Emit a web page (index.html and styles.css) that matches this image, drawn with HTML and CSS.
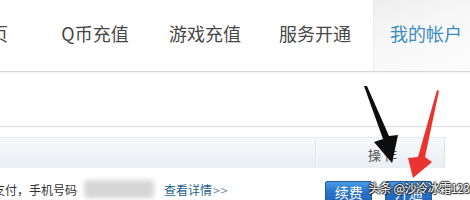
FILE: index.html
```html
<!DOCTYPE html>
<html lang="zh">
<head>
<meta charset="utf-8">
<link rel="stylesheet" href="styles.css">
</head>
<body>
<div class="page">
  <nav class="nav">
    <a class="nav-item first">首页</a>
    <a class="nav-item">Q币充值</a>
    <a class="nav-item">游戏充值</a>
    <a class="nav-item">服务开通</a>
    <a class="nav-item active">我的帐户</a>
  </nav>
  <div class="content">
    <div class="rule"></div>
    <div class="thead">
      <div class="th th-main"></div>
      <div class="th th-op">操 作</div>
    </div>
    <div class="row">
      <span class="desc">支付，手机号码</span>
      <span class="blur"></span>
      <a class="detail">查看详情<span class="gt">&gt;&gt;</span></a>
      <span class="btns">
        <button class="btn">续费</button>
        <button class="btn">开通</button>
      </span>
    </div>
  </div>
  <svg class="arrows" width="470" height="200" viewBox="0 0 470 200">
    <polygon fill="#0d0d0d" points="364,86 367,86 389,136 398,135 392,163 374,142 383,139"/>
    <polygon fill="#e9342f" points="437,90 439,91 425,157 432,162 413,178 408,158 418,157"/>
  </svg>
  <div class="watermark">头条 @沙冷冰霜123</div>
</div>
</body>
</html>
```
FILE: styles.css
```css
* { box-sizing: border-box; }
html, body { margin: 0; padding: 0; background: #fff; }
body {
  width: 470px;
  height: 200px;
  overflow: hidden;
  font-family: "Noto Sans CJK SC", "Noto Sans", sans-serif;
}
.page { position: relative; width: 470px; height: 200px; overflow: hidden; }

.nav {
  display: flex;
  height: 72px;
  margin-left: -70px;
  border-bottom: 1px solid #d6d6d6;
  box-shadow: 0 1px 2px rgba(0,0,0,0.06);
}
.nav-item {
  flex: 0 0 110px;
  display: flex;
  align-items: center;
  justify-content: center;
  padding-bottom: 5px;
  font-size: 18px;
  color: #474747;
  white-space: nowrap;
}
.nav-item.first { justify-content: flex-end; padding-right: 32px; }
.nav-item.active {
  flex: 0 0 120px;
  margin-left: 3px;
  padding-right: 14px;
  color: #3b8bc0;
  background: linear-gradient(160deg, #eeeeee 0%, #f7f7f7 40%, #fdfdfd 100%);
  box-shadow: inset 1px 0 0 #ececec;
}

.content { padding-top: 54px; }
.rule { height: 1px; background: #dcdcdc; }
.thead {
  display: flex;
  margin-top: 10px;
  width: 445px;
  height: 31px;
  border-top: 1px solid #e4e9ee;
  border-right: 1px solid #dce2e8;
  background: linear-gradient(#f7f9fb, #e9eef3);
}
.th { height: 100%; }
.th-main { width: 316px; border-right: 1px solid #dde3e9; box-shadow: 1px 0 0 #fafcfd; }
.th-op {
  flex: 1;
  display: flex;
  align-items: center;
  justify-content: center;
  padding-left: 5px;
  padding-top: 2px;
  font-size: 13px;
  color: #555;
}

.row {
  display: flex;
  align-items: center;
  height: 30px;
  margin-left: -7px;
  padding-top: 12px;
  font-size: 12px;
  color: #333;
}
.desc { white-space: nowrap; }
.blur {
  width: 70px;
  height: 18px;
  margin-left: 7px;
  background: #d6d6d6;
  border-radius: 4px;
  filter: blur(2.5px);
}
.detail {
  margin-left: 10px;
  color: #1f5f8f;
  white-space: nowrap;
}
.gt { color: #6f8fa8; margin-left: 1px; letter-spacing: 1px; }
.btns { display: flex; gap: 13px; margin-left: 97px; margin-top: 6px; }
.btn {
  width: 47px;
  height: 22px;
  padding: 0;
  border: 1px solid #1f5c9e;
  border-radius: 2px;
  background: linear-gradient(#4a9be6, #2b73c9 50%, #1f66bb);
  color: #fff;
  font-family: inherit;
  font-size: 14px;
  line-height: 20px;
}

.arrows { position: absolute; left: 0; top: 0; pointer-events: none; }
.watermark {
  position: absolute;
  left: 368px;
  top: 180px;
  font-size: 12px;
  letter-spacing: -0.4px;
  line-height: 16px;
  color: #fff;
  white-space: nowrap;
  text-shadow: 1px 1px 1px #222, -1px 0 1px #333, 0 -1px 1px #333, 0 0 2px #000;
}
```
